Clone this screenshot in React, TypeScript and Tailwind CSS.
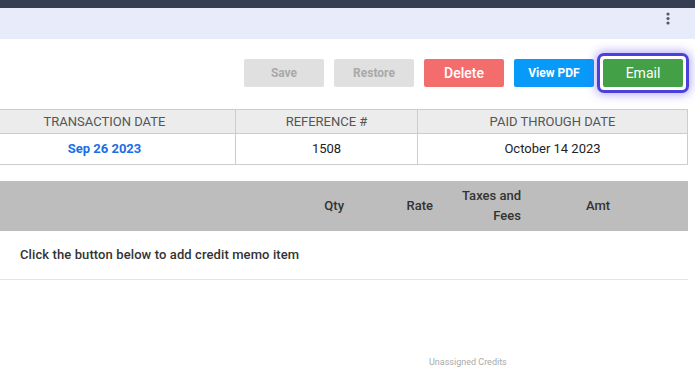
import React from "react";

export default function App() {
  return (
    <div className="w-[695px] h-[377px] bg-white overflow-hidden" style={{ fontFamily: "Roboto, 'Liberation Sans', sans-serif" }}>
      <div className="h-[8px] bg-[#363e52]" />
      <div className="h-[31px] bg-[#e8ebfa] flex justify-end items-start pr-[25px] pt-[4px]">
        <svg width="4" height="14" viewBox="0 0 4 14">
          <circle cx="2" cy="2" r="1.6" fill="#555a66" />
          <circle cx="2" cy="6.5" r="1.6" fill="#555a66" />
          <circle cx="2" cy="11" r="1.6" fill="#555a66" />
        </svg>
      </div>
      <div className="flex justify-end items-center gap-[10px] pr-[6px] pt-[20px] h-[48px]">
        <button className="w-[80px] h-[28px] rounded-[2px] bg-[#e0e0e0] text-[#a9a9a9] text-[12px] font-bold">Save</button>
        <button className="w-[80px] h-[28px] rounded-[2px] bg-[#e0e0e0] text-[#a9a9a9] text-[12px] font-bold">Restore</button>
        <button className="w-[80px] h-[28px] rounded-[2px] bg-[#f36d6d] text-white text-[14px] font-medium">Delete</button>
        <button className="w-[80px] h-[28px] rounded-[2px] bg-[#079af9] text-white text-[12px] font-bold">View PDF</button>
        <div className="-ml-[7px] -my-[6px] rounded-[7px] border-[3px] border-[#4b40dc] p-[3px] shadow-[0_0_10px_2px_rgba(100,85,240,0.45)] bg-white">
          <button className="block w-[80px] h-[28px] rounded-[2px] bg-[#43a047] text-white text-[14px]">Email</button>
        </div>
      </div>
      <div className="mt-[22px] w-[688px] border-t border-b border-r border-[#cccccc]">
        <div className="flex h-[24px] bg-[#ececec] border-b border-[#cccccc] text-[13px] text-[#555] uppercase">
          <div className="w-[236px] pr-[26px] flex items-center justify-center border-r border-[#cccccc]">Transaction Date</div>
          <div className="w-[182px] flex items-center justify-center border-r border-[#cccccc]">Reference #</div>
          <div className="flex-1 flex items-center justify-center">Paid Through Date</div>
        </div>
        <div className="flex h-[30px] text-[13px] text-[#222]">
          <div className="w-[236px] pr-[26px] flex items-center justify-center border-r border-[#cccccc] text-[#1a6ee6] font-bold">Sep 26 2023</div>
          <div className="w-[182px] flex items-center justify-center border-r border-[#cccccc]">1508</div>
          <div className="flex-1 flex items-center justify-center">October 14 2023</div>
        </div>
      </div>
      <div className="mt-[16px] w-[688px] h-[50px] bg-[#bdbdbd] flex items-center text-[13px] font-medium text-[#333]">
        <div className="flex-1" />
        <div className="w-[52px] pr-[8px] text-right">Qty</div>
        <div className="w-[89px] pr-[8px] text-right">Rate</div>
        <div className="w-[88px] pr-[8px] text-right leading-[20px]">Taxes and<br />Fees</div>
        <div className="w-[138px] text-center">Amt</div>
        <div className="w-[21px]" />
      </div>
      <div className="w-[688px] h-[49px] border-b border-[#e3e3e3] flex items-center pl-[20px] text-[13px] font-medium tracking-[0.1px] text-[#333]">
        Click the button below to add credit memo item
      </div>
      <div className="pl-[429px] pt-[76px] text-[9px] text-[#aaaaaa]">Unassigned Credits</div>
    </div>
  );
}
